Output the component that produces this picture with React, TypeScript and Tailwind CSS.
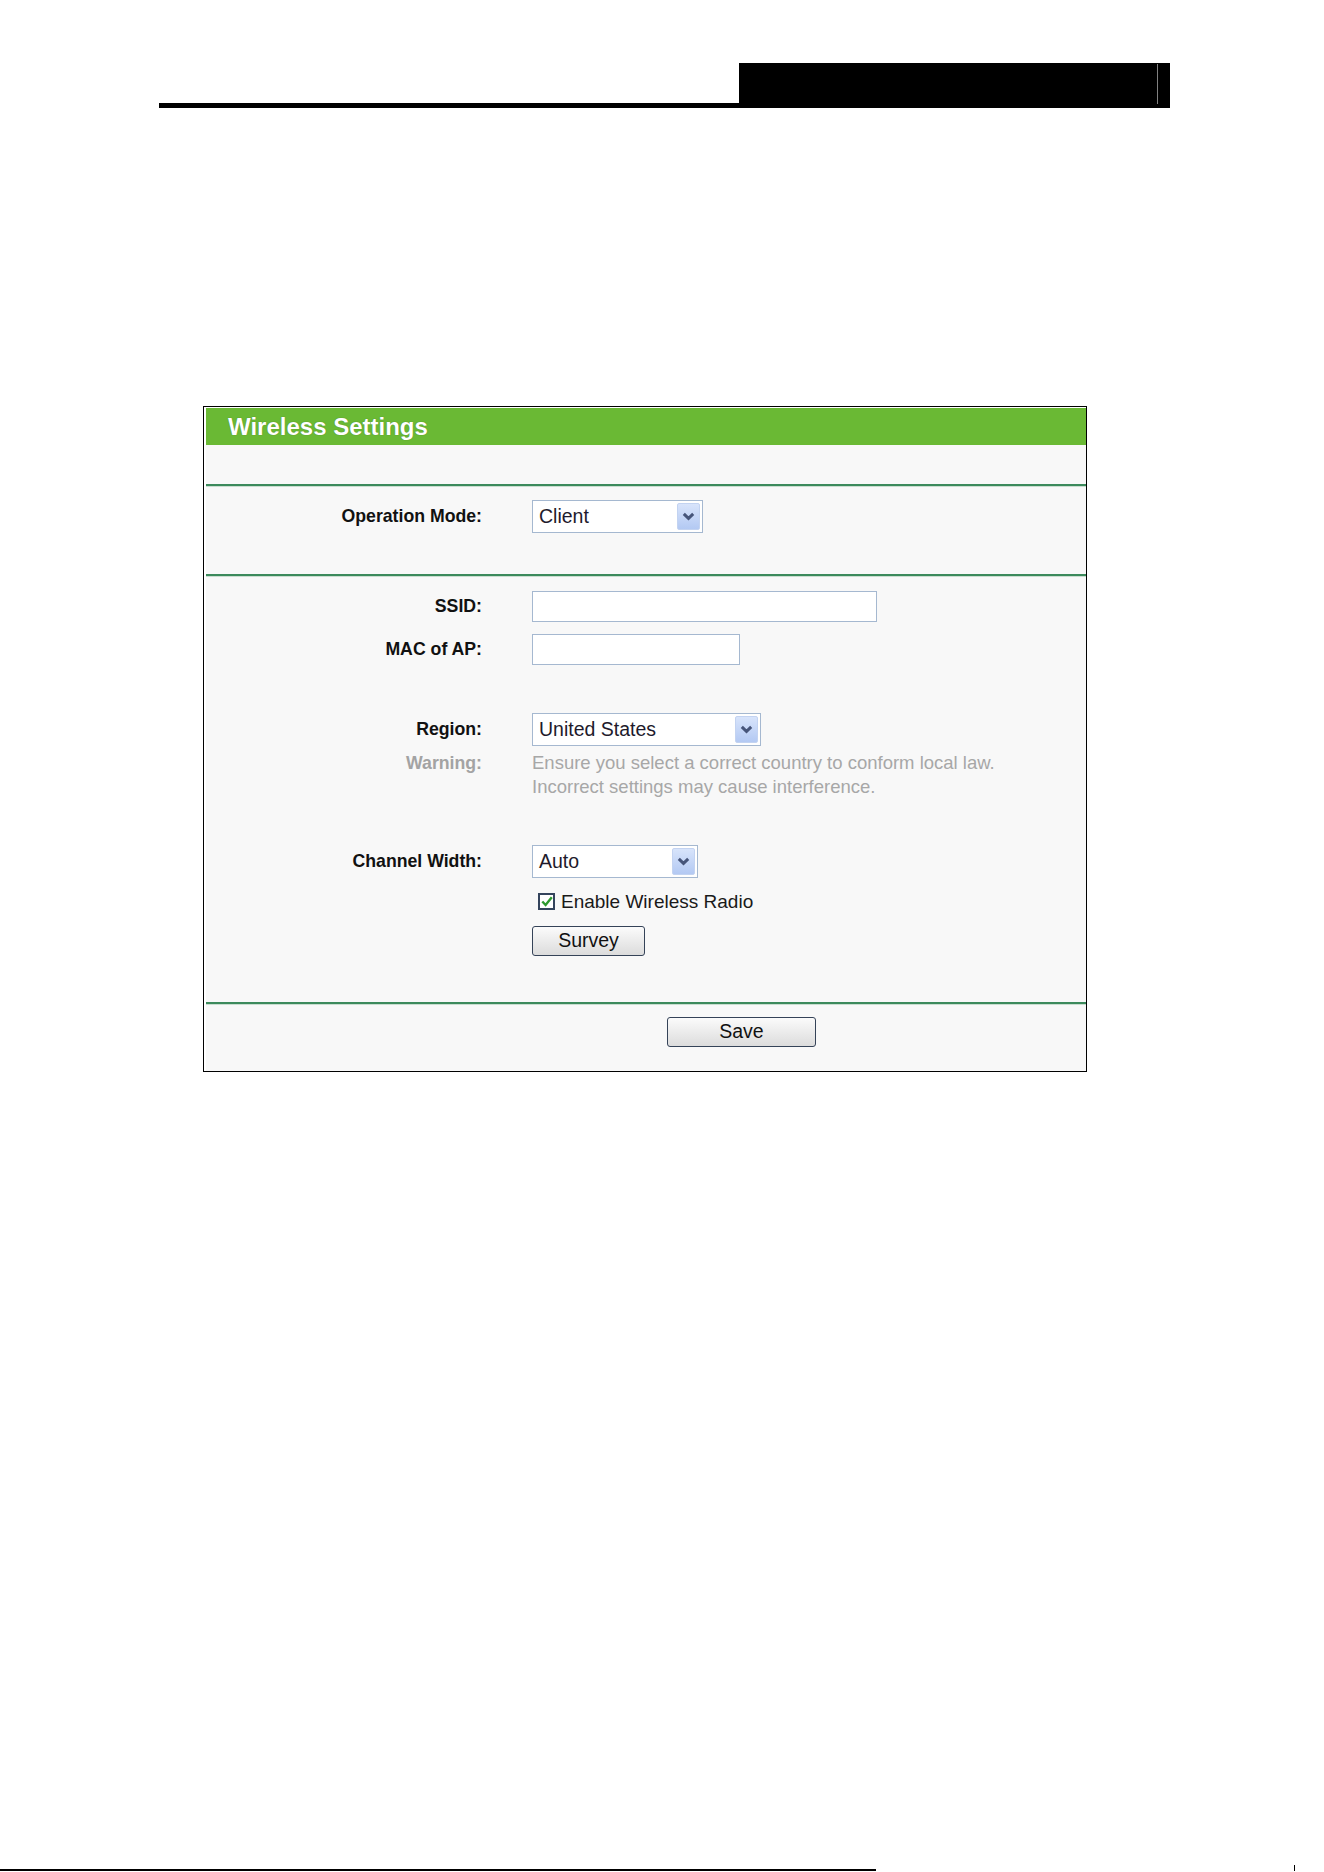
import React from "react";

const font = { fontFamily: '"Liberation Sans", Arial, sans-serif' };

function Chevron() {
  return (
    <svg width="13" height="9" viewBox="0 0 13 9">
      <path d="M1.8 1.8 L6.5 6.3 L11.2 1.8" fill="none" stroke="#46557a" strokeWidth="3" />
    </svg>
  );
}

function Select({ value, w }: { value: string; w: string }) {
  return (
    <div className={`${w} h-[33px] border border-[#a5b8d0] bg-white flex items-center justify-between pl-[6px] pr-[2px]`}>
      <span className="text-[19.5px] text-[#1e1a2c] leading-none">{value}</span>
      <div className="w-[23px] h-[27px] rounded-[2px] bg-gradient-to-b from-[#d8e4fb] to-[#b3c9f3] border border-[#c3d3f1] flex items-center justify-center">
        <Chevron />
      </div>
    </div>
  );
}

function Label({ text, gray }: { text: string; gray?: boolean }) {
  return (
    <div className={`w-[276px] text-right font-bold text-[17.7px] leading-none ${gray ? "text-[#a3a3a3]" : "text-[#111]"}`}>
      {text}
    </div>
  );
}

function Divider() {
  return (
    <div className="h-[3px] flex flex-col">
      <div className="h-[2px] bg-[#3c8a5c]" />
      <div className="h-px bg-[#c9ded0]" />
    </div>
  );
}

function Button({ text, w }: { text: string; w: string }) {
  return (
    <div className={`${w} h-[30px] rounded-[3px] border border-[#354358] bg-gradient-to-b from-[#fbfbfb] to-[#dcdcdc] flex items-center justify-center text-[19.5px] text-[#111] leading-none`}>
      {text}
    </div>
  );
}

export default function App() {
  return (
    <div className="w-[1324px] h-[1872px] bg-white flex flex-col" style={font}>
      {/* Header */}
      <div className="mt-[63px] ml-[159px] w-[1011px] flex items-end">
        <div className="flex-1 h-[5px] bg-black" />
        <div className="w-[431px] h-[45px] bg-black flex justify-end pt-px pr-[12px]">
          <div className="w-px h-[40px] bg-[#808080]" />
        </div>
      </div>

      {/* Panel */}
      <div className="mt-[298px] ml-[203px] w-[884px] border border-black bg-white pt-px pl-[2px]">
        <div className="bg-[#f8f8f8]">
          <div className="h-[37px] bg-[#6ab934] flex items-center pl-[22px]">
            <span className="text-white font-bold text-[24px] leading-none" style={{ textShadow: "0 0 1px rgba(40,80,20,0.6)" }}>
              Wireless Settings
            </span>
          </div>
          <div className="h-[39px]" />
          <Divider />

          <div className="h-[87px] pt-[13px]">
            <div className="flex items-center">
              <Label text="Operation Mode:" />
              <div className="ml-[50px]">
                <Select value="Client" w="w-[171px]" />
              </div>
            </div>
          </div>
          <Divider />

          <div className="pt-[14px] pb-[46px] flex flex-col">
            <div className="flex items-center h-[31px]">
              <Label text="SSID:" />
              <div className="ml-[50px] w-[345px] h-[31px] border border-[#a5b8d0] bg-white" />
            </div>
            <div className="flex items-center h-[31px] mt-[12px]">
              <Label text="MAC of AP:" />
              <div className="ml-[50px] w-[208px] h-[31px] border border-[#a5b8d0] bg-white" />
            </div>
            <div className="flex items-center h-[33px] mt-[48px]">
              <Label text="Region:" />
              <div className="ml-[50px]">
                <Select value="United States" w="w-[229px]" />
              </div>
            </div>
            <div className="flex mt-[5px]">
              <div className="w-[276px] text-right font-bold text-[17.7px] leading-[24px] text-[#a3a3a3]">Warning:</div>
              <div className="ml-[50px] text-[18.5px] leading-[24px] text-[#a7a7a7]">
                <div>Ensure you select a correct country to conform local law.</div>
                <div>Incorrect settings may cause interference.</div>
              </div>
            </div>
            <div className="flex items-center h-[33px] mt-[46px]">
              <Label text="Channel Width:" />
              <div className="ml-[50px]">
                <Select value="Auto" w="w-[166px]" />
              </div>
            </div>
            <div className="flex items-center h-[24px] mt-[11px] ml-[332px]">
              <div className="w-[17px] h-[17px] border-2 border-[#34445c] bg-white flex items-center justify-center">
                <svg width="12" height="11" viewBox="0 0 12 11">
                  <path d="M1.3 5.5 L4.6 9 L10.8 1.3" fill="none" stroke="#2e9a2e" strokeWidth="2.4" />
                </svg>
              </div>
              <span className="ml-[6px] text-[19px] leading-none text-[#1a1a1a]">Enable Wireless Radio</span>
            </div>
            <div className="mt-[13px] ml-[326px]">
              <Button text="Survey" w="w-[113px]" />
            </div>
          </div>
          <Divider />

          <div className="pt-[12px] pb-[24px]">
            <div className="ml-[461px]">
              <Button text="Save" w="w-[149px]" />
            </div>
          </div>
        </div>
      </div>

      {/* Footer */}
      <div className="mt-auto h-[8px] flex items-end mb-[1px]">
        <div className="w-[876px] h-[2px] bg-black" />
        <div className="ml-[418px] w-px h-[6px] bg-black" />
      </div>
    </div>
  );
}
